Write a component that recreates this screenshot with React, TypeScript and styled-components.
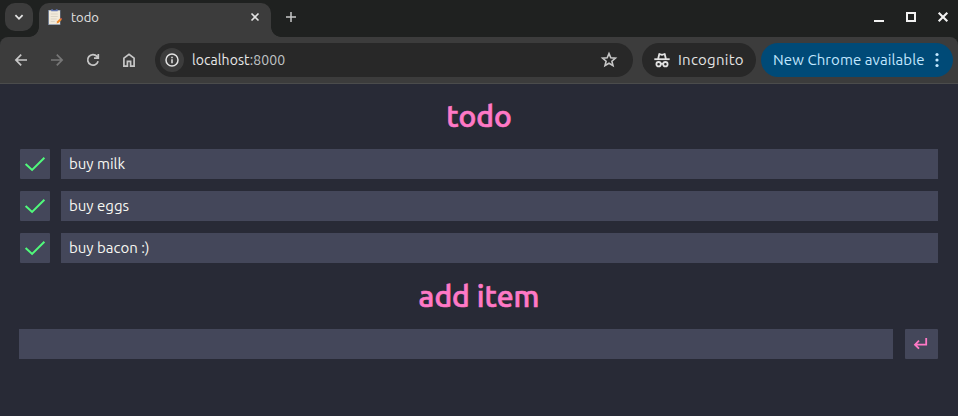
import React from "react";
import styled, { createGlobalStyle } from "styled-components";

const GlobalStyle = createGlobalStyle`
  *, *::before, *::after { box-sizing: border-box; }
  html, body { margin: 0; height: 100%; background: #282a36; overflow: hidden; }
  body { font-family: Ubuntu, "Noto Sans", "Open Sans", sans-serif; }
  button, input { font: inherit; border: 0; padding: 0; margin: 0; outline: 0; }
  svg { display: block; flex: none; }
`;

const Window = styled.div`
  width: 958px;
  height: 416px;
  display: flex;
  flex-direction: column;
  background: #1f2120;
`;

const TabStrip = styled.div`
  height: 37px;
  display: flex;
  align-items: flex-start;
  padding: 3px 9px 0 5px;
`;

const TabSearch = styled.button`
  width: 28px;
  height: 28px;
  border-radius: 10px;
  background: #3c3c3c;
  display: grid;
  place-items: center;
  margin-right: 6px;
`;

const Tab = styled.div`
  position: relative;
  width: 232px;
  height: 34px;
  display: flex;
  align-items: center;
  padding: 0 11px 6px 8px;
  border-radius: 10px 10px 0 0;
  background: #3c3c3c;
  color: #e3e3e3;

  &::before, &::after {
    content: "";
    position: absolute;
    bottom: 0;
    width: 10px;
    height: 10px;
  }
  &::before {
    left: -10px;
    background: radial-gradient(circle at 0 0, transparent 9.5px, #3c3c3c 10.2px);
  }
  &::after {
    right: -10px;
    background: radial-gradient(circle at 100% 0, transparent 9.5px, #3c3c3c 10.2px);
  }
`;

const TabTitle = styled.span`
  flex: 1;
  margin-left: 8px;
  font-size: 13px;
  line-height: 20px;
`;

const NewTab = styled.button`
  width: 28px;
  height: 28px;
  margin-left: 6px;
  display: grid;
  place-items: center;
  background: none;
`;

const WindowControls = styled.div`
  margin: 8px 0 0 auto;
  display: flex;
  gap: 20px;
`;

const Toolbar = styled.div`
  height: 47px;
  display: flex;
  align-items: center;
  padding: 0 5px 1px 3px;
  background: #3c3c3c;
  border-radius: 8px 8px 0 0;
  box-shadow: inset 0 -1px #4b4c4c;
`;

const NavButton = styled.button`
  width: 36px;
  height: 34px;
  display: grid;
  place-items: center;
  background: none;
`;

const AddressBar = styled.div`
  width: 478px;
  height: 34px;
  margin-left: 8px;
  padding: 0 14px 0 5px;
  display: flex;
  align-items: center;
  border-radius: 17px;
  background: #282828;
`;

const SiteInfo = styled.span`
  width: 24px;
  height: 24px;
  border-radius: 50%;
  display: grid;
  place-items: center;
  background: #3c3c3c;
`;

const Address = styled.span`
  flex: 1;
  margin-left: 8px;
  font-size: 14px;
  letter-spacing: 0.08px;
  line-height: 20px;
  color: #e8e8e8;
`;

const Port = styled.span`
  color: #c0c4c6;
`;

const Incognito = styled.div`
  width: 114px;
  height: 34px;
  margin-left: 9px;
  padding-left: 12px;
  display: flex;
  align-items: center;
  gap: 8px;
  border-radius: 17px;
  background: #282828;
  color: #e3e3e3;
  font-size: 15px;
  white-space: nowrap;
`;

const Update = styled.button`
  width: 192px;
  height: 34px;
  margin-left: 5px;
  padding: 0 14px 0 12px;
  display: flex;
  align-items: center;
  justify-content: space-between;
  border-radius: 17px;
  background: #004a77;
  color: #c2e7ff;
  font-size: 15px;
  white-space: nowrap;
`;

const Label = styled.span<{ $spacing: number }>`
  letter-spacing: ${(p) => p.$spacing}px;
  line-height: 20px;
`;

const Page = styled.main`
  flex: 1;
  padding: 12px 20px 0;
  background: #282a36;
  color: #f8f8f2;
`;

const Heading = styled.h1`
  margin: 0;
  height: 40px;
  line-height: 40px;
  text-align: center;
  font-size: 30px;
  font-weight: 500;
  -webkit-text-stroke: 0.7px #ff79c6;
  color: #ff79c6;
`;

const List = styled.ul`
  list-style: none;
  margin: 13px 0 13px;
  padding: 0;
  display: grid;
  gap: 12px;
`;

const Item = styled.li`
  display: flex;
  gap: 11px;
  height: 30px;
`;

const CheckButton = styled.button`
  width: 30px;
  height: 30px;
  background: #44475a;
  border-radius: 1px;
`;

const ItemText = styled.div`
  flex: 1;
  padding-left: 8px;
  background: #44475a;
  font-size: 15px;
  line-height: 30px;
`;

const AddForm = styled.div`
  display: flex;
  gap: 12px;
  margin: 13px 0 0 -1px;
`;

const AddInput = styled.input`
  flex: 1;
  height: 30px;
  background: #44475a;
  color: #f8f8f2;
`;

const AddButton = styled.button`
  width: 33px;
  height: 30px;
  background: #44475a;
  border-radius: 1px;
`;

const stroke = { fill: "none", stroke: "#c7c7c7", strokeWidth: 1.7 };

const Favicon = () => (
  <svg width="16" height="16" viewBox="0 0 16 16">
    <rect x="1.2" y="1" width="12.2" height="15" fill="#8190a8" />
    <rect x="2" y="1.6" width="11" height="13.6" fill="#f1eadb" />
    <path d="M4.2 0.2h1.5l.6.8h2.2l.6-.8h1.6v2H4.2z" fill="#6276b3" />
    <path d="M3.8 5h7M3.8 7.5h7M3.8 10h6M3.8 12.5h4" stroke="#d2ccbd" strokeWidth="0.7" />
    <path d="M9.6 14.4l.6-2.1 3-3.1 1.6 1.5-3.1 3.1z" fill="#ef8b2c" />
    <path d="M13.2 9.2l.7-.5 1.3 1.2-.4.8z" fill="#d75e58" />
  </svg>
);

const Check = () => (
  <svg width="30" height="30" viewBox="0 0 30 30">
    <path d="M5.6 14.9l6.5 6L24.4 8.8" fill="none" stroke="#50fa7b" strokeWidth="2" />
  </svg>
);

const IncognitoIcon = () => (
  <svg width="16" height="16" viewBox="0 0 16 16" fill="none" stroke="#e3e3e3" strokeWidth="1.8">
    <path d="M.3 7.2h15.4" />
    <path d="M4.1 7l1.2-5 2.7.8 2.7-.8 1.2 5" strokeLinejoin="round" />
    <circle cx="4.6" cy="12.2" r="2.2" />
    <circle cx="11.4" cy="12.2" r="2.2" />
    <path d="M6.6 12q1.4-.9 2.8 0" />
  </svg>
);

const items = ["buy milk", "buy eggs", "buy bacon :)"];

export default function App() {
  return (
    <>
      <GlobalStyle />
      <Window>
        <TabStrip>
          <TabSearch aria-label="Search tabs">
            <svg width="10" height="10" viewBox="0 0 10 10">
              <path d="M1.4 3.2L5 6.8l3.6-3.6" fill="none" stroke="#e3e3e3" strokeWidth="1.8" />
            </svg>
          </TabSearch>
          <Tab>
            <Favicon />
            <TabTitle>todo</TabTitle>
            <svg width="10" height="10" viewBox="0 0 10 10">
              <path d="M1.5 1.5l7 7m0-7l-7 7" fill="none" stroke="#e3e3e3" strokeWidth="1.6" />
            </svg>
          </Tab>
          <NewTab aria-label="New tab">
            <svg width="10" height="10" viewBox="0 0 10 10">
              <path d="M5 0v10M0 5h10" fill="none" stroke="#c7c7c7" strokeWidth="1.5" />
            </svg>
          </NewTab>
          <WindowControls>
            <svg width="12" height="12" viewBox="0 0 12 12"><path d="M1 10h10" stroke="#f2f2f2" strokeWidth="2" /></svg>
            <svg width="12" height="12" viewBox="0 0 12 12"><path d="M2 2h8v8H2z" fill="none" stroke="#f2f2f2" strokeWidth="2" /></svg>
            <svg width="12" height="12" viewBox="0 0 12 12"><path d="M1.7 1.7l8.6 8.6m0-8.6l-8.6 8.6" stroke="#f2f2f2" strokeWidth="2.1" /></svg>
          </WindowControls>
        </TabStrip>
        <Toolbar>
          <NavButton aria-label="Back">
            <svg width="14" height="14" viewBox="0 0 14 14"><path {...stroke} d="M13 7H2.2M7.2 1.7L1.9 7l5.3 5.3" /></svg>
          </NavButton>
          <NavButton aria-label="Forward">
            <svg width="14" height="14" viewBox="0 0 14 14"><path {...stroke} stroke="#777777" d="M1 7h10.8M6.8 1.7L12.1 7l-5.3 5.3" /></svg>
          </NavButton>
          <NavButton aria-label="Reload">
            <svg width="14" height="14" viewBox="0 0 14 14">
              <path {...stroke} d="M12.1 8.3A5.3 5.3 0 1 1 11 3.4l1.2 1.4M12.3.9v4.3H8" />
            </svg>
          </NavButton>
          <NavButton aria-label="Home">
            <svg width="14" height="14" viewBox="0 0 14 14">
              <path {...stroke} d="M1.9 5.1L7 1.2l5.1 3.9v8H8.6V8.4H5.4v4.7H1.9z" />
            </svg>
          </NavButton>
          <AddressBar>
            <SiteInfo>
              <svg width="14" height="14" viewBox="0 0 14 14">
                <circle cx="7" cy="7" r="6" fill="none" stroke="#e3e3e3" strokeWidth="1.5" />
                <path d="M7 6.2v4M7 3.7v1.5" stroke="#e3e3e3" strokeWidth="1.5" />
              </svg>
            </SiteInfo>
            <Address>localhost<Port>:8000</Port></Address>
            <svg width="20" height="20" viewBox="0 0 20 20">
              <path {...stroke} strokeWidth="1.6" d="M10 3.6l1.8 4.2 4.6.4-3.5 3 1.1 4.5-4-2.4-4 2.4 1.1-4.5-3.5-3 4.6-.4z" />
            </svg>
          </AddressBar>
          <Incognito>
            <IncognitoIcon />
            <Label $spacing={0.25}>Incognito</Label>
          </Incognito>
          <Update>
            <Label $spacing={0.08}>New Chrome available</Label>
            <svg width="4" height="16" viewBox="0 0 4 16" fill="#c2e7ff">
              <circle cx="2" cy="2.5" r="1.6" /><circle cx="2" cy="8" r="1.6" /><circle cx="2" cy="13.5" r="1.6" />
            </svg>
          </Update>
        </Toolbar>
        <Page>
          <Heading>todo</Heading>
          <List>
            {items.map((text) => (
              <Item key={text}>
                <CheckButton aria-label="Complete"><Check /></CheckButton>
                <ItemText>{text}</ItemText>
              </Item>
            ))}
          </List>
          <Heading>add item</Heading>
          <AddForm>
            <AddInput aria-label="New item" />
            <AddButton aria-label="Add item">
              <svg width="33" height="30" viewBox="0 0 33 30">
                <path d="M21.2 9v6.7H10.2M14 11.7l-4 4 4 4" fill="none" stroke="#ff79c6" strokeWidth="1.8" />
              </svg>
            </AddButton>
          </AddForm>
        </Page>
      </Window>
    </>
  );
}
